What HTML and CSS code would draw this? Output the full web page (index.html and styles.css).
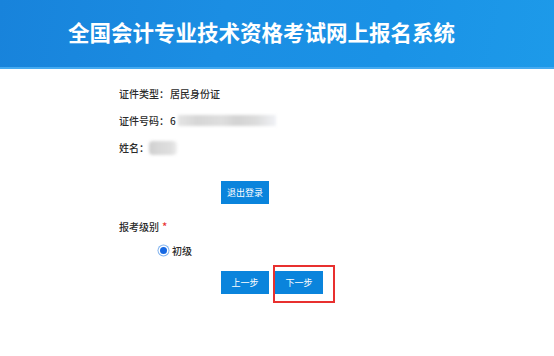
FILE: index.html
```html
<!DOCTYPE html>
<html lang="zh">
<head>
<meta charset="utf-8">
<link rel="stylesheet" href="styles.css">
</head>
<body>
<header class="header">
  <h1 class="title">全国会计专业技术资格考试网上报名系统</h1>
</header>
<main class="content">
  <div class="row"><span class="label">证件类型：</span><span class="value">居民身份证</span></div>
  <div class="row"><span class="label">证件号码：</span><span class="value">6</span><span class="mask mask-id"></span></div>
  <div class="row"><span class="label">姓名：</span><span class="mask mask-name"></span></div>
  <div class="logout-wrap"><button class="btn">退出登录</button></div>
  <div class="level-row">报考级别 <span class="star">*</span></div>
  <div class="radio-row"><span class="radio"></span><span class="radio-label">初级</span></div>
  <div class="actions">
    <button class="btn">上一步</button>
    <div class="next-wrap"><button class="btn">下一步</button><span class="highlight"></span></div>
  </div>
</main>
</body>
</html>
```
FILE: styles.css
```css
html, body {
  margin: 0;
  padding: 0;
  background: #fff;
}
body {
  min-height: 356px;
  font-family: "Microsoft YaHei", "Noto Sans CJK SC", sans-serif;
  color: #2a2a2a;
}
.header {
  height: 67px;
  border-bottom: 2px solid #45aaf0;
  background: linear-gradient(100deg, #1883db 0%, #1b8ee3 40%, #1a92e6 70%, #1d9ae9 100%);
  display: flex;
  align-items: center;
  justify-content: center;
  box-sizing: content-box;
}
.title {
  margin: 0 31px 4px 0;
  color: #fff;
  font-size: 21.5px;
  font-weight: bold;
  line-height: 1;
}
.content {
  padding: 11px 0 40px 119px;
  font-size: 10px;
  font-weight: 500;
}
.row {
  height: 27px;
  display: flex;
  align-items: center;
}
.value {
  margin-left: 1px;
}
.mask {
  display: inline-block;
  filter: blur(1.5px);
}
.mask-id {
  width: 98px;
  height: 11px;
  margin-left: 2px;
  background: linear-gradient(90deg, #e4e4e4 0%, #d6d6d6 20%, #dedede 45%, #d3d3d3 60%, #dcdcdc 80%, #f0f2f6 100%);
}
.mask-name {
  width: 28px;
  height: 14px;
  border-radius: 4px;
  background: linear-gradient(90deg, #cfcfcf 0%, #d9d9d9 40%, #dfdfdf 80%, #efefef 100%);
}
.logout-wrap {
  margin: 20px 0 0 102px;
}
.btn {
  width: 48px;
  height: 23px;
  border: none;
  padding: 0;
  background: #0a84dc;
  color: #fff;
  font-family: "Microsoft YaHei", "Noto Sans CJK SC", sans-serif;
  font-size: 9px;
  display: block;
}
.level-row {
  margin-top: 12px;
  height: 20px;
  display: flex;
  align-items: center;
  gap: 3px;
}
.star {
  color: #e8302f;
  font-size: 11px;
}
.radio-row {
  margin: 4px 0 0 41px;
  height: 20px;
  display: flex;
  align-items: center;
  gap: 3px;
}
.radio {
  width: 7px;
  height: 7px;
  border-radius: 50%;
  background: #1668e3;
  box-shadow: 0 0 0 1.5px #fff, 0 0 0 2.5px #7fb2ef;
}
.radio-label {
  margin-left: 2px;
}
.actions {
  margin: 11px 0 0 102px;
  display: flex;
  gap: 6px;
}
.next-wrap {
  position: relative;
}
.highlight {
  position: absolute;
  left: -2px;
  top: -6px;
  width: 58px;
  height: 34px;
  border: 2px solid #e8302f;
}
```
